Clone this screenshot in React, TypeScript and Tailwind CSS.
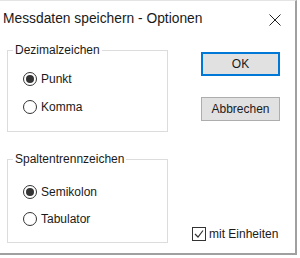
function Radio({ label, checked }: { label: string; checked?: boolean }) {
  return (
    <div className="flex items-center h-[14px]">
      <span className="w-[14px] h-[14px] rounded-full border border-[#333] bg-white flex items-center justify-center">
        {checked && <span className="w-[8px] h-[8px] rounded-full bg-[#333]" />}
      </span>
      <span className="ml-[4px] text-[12px] leading-none">{label}</span>
    </div>
  );
}

function GroupBox({ title, children, className }: { title: string; children: React.ReactNode; className?: string }) {
  return (
    <div className={`relative w-[161px] border border-[#dcdcdc] ${className ?? ''}`}>
      {/* legend sits on the top border */}
      <span className="absolute left-[5px] top-[-9px] bg-white px-[2px] text-[12px] leading-[16px]">{title}</span>
      {children}
    </div>
  );
}

export default function App() {
  return (
    <div className="w-[300px] h-[258px] bg-white font-['Liberation_Sans',Arial,sans-serif] text-[#1a1a1a]">
      <div className="w-[297px] h-[255px] border-t border-r-2 border-b-2 border-t-[#e4e4e4] border-r-[#a0a0a0] border-b-[#a0a0a0] flex flex-col">
        {/* title bar */}
        <div className="h-[36px] flex items-center justify-between pl-[3px] pr-[14px]">
          <span className="text-[13.8px] leading-none">Messdaten speichern - Optionen</span>
          <svg width="12" height="12" viewBox="0 0 12 12" className="mt-[1px]">
            <path d="M0.5 0.5 L11.5 11.5 M11.5 0.5 L0.5 11.5" stroke="#222" strokeWidth="1" />
          </svg>
        </div>

        <div className="flex flex-1">
          <div className="pl-[7px] flex flex-col">
            <GroupBox title="Dezimalzeichen" className="mt-[13px] h-[82px] pl-[15px] pt-[21px]">
              <div className="flex flex-col gap-[14px]">
                <Radio label="Punkt" checked />
                <Radio label="Komma" />
              </div>
            </GroupBox>
            <GroupBox title="Spaltentrennzeichen" className="mt-[27px] h-[84px] pl-[15px] pt-[25px]">
              <div className="flex flex-col gap-[13px]">
                <Radio label="Semikolon" checked />
                <Radio label="Tabulator" />
              </div>
            </GroupBox>
          </div>

          <div className="flex-1 flex flex-col pl-[24px]">
            <button className="ml-[9px] mt-[15px] w-[79px] h-[24px] bg-[#e1e1e1] border-2 border-[#0078d7] text-[12px]">
              OK
            </button>
            <button className="ml-[9px] mt-[21px] w-[79px] h-[24px] bg-[#e1e1e1] border border-[#adadad] text-[12px]">
              Abbrechen
            </button>
            <div className="mt-auto mb-[12px] flex items-center">
              <span className="w-[14px] h-[14px] border border-[#333] bg-white flex items-center justify-center">
                <svg width="10" height="10" viewBox="0 0 10 10">
                  <path d="M1 5 L4 8 L9 1.5" fill="none" stroke="#333" strokeWidth="1.2" />
                </svg>
              </span>
              <span className="ml-[3px] text-[12px] leading-none">mit Einheiten</span>
            </div>
          </div>
        </div>
      </div>
    </div>
  );
}
